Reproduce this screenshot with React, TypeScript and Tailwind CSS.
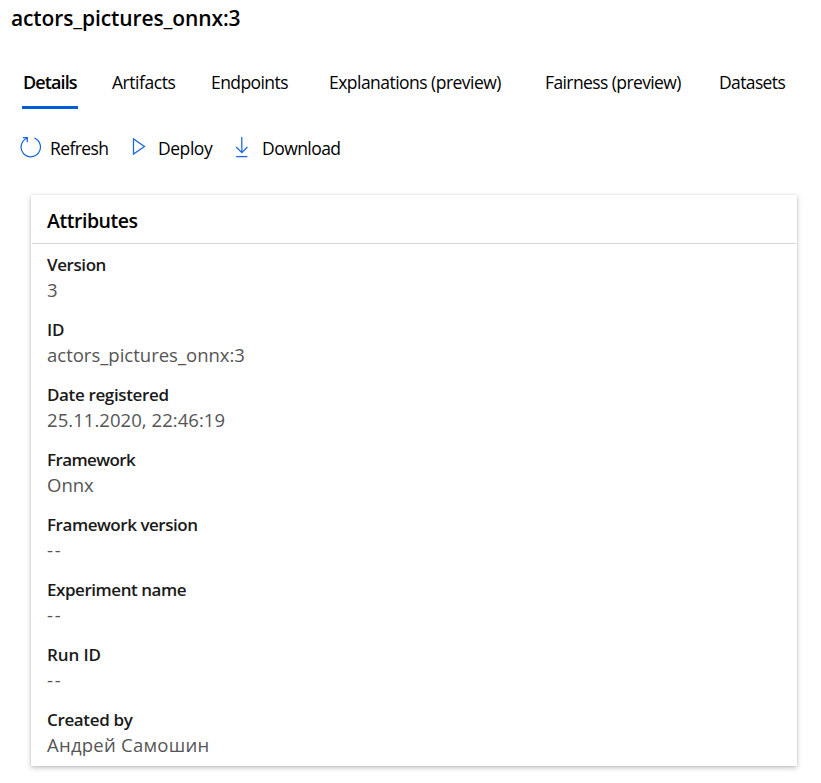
const tabs = [
  { label: 'Details', style: 'w-[56px] text-[18px] font-semibold tracking-[-0.9px] border-[#015cda]', gap: 'ml-[22px]' },
  { label: 'Artifacts', style: 'w-[66px] text-[17.5px] tracking-[-0.45px] border-transparent', gap: 'ml-[33px]' },
  { label: 'Endpoints', style: 'w-[80px] text-[17.5px] tracking-[-0.58px] border-transparent', gap: 'ml-[33px]' },
  { label: 'Explanations (preview)', style: 'w-[174px] text-[17.5px] tracking-[-0.53px] border-transparent', gap: 'ml-[38px]' },
  { label: 'Fairness (preview)', style: 'w-[138px] text-[17.5px] tracking-[-0.6px] border-transparent', gap: 'ml-[42px]' },
  { label: 'Datasets', style: 'w-[68px] text-[17.5px] tracking-[-0.62px] border-transparent', gap: 'ml-[36px]' },
];

const attributes = [
  { label: 'Version', value: '3', l: 'tracking-[-0.42px]', v: 'tracking-[0px]' },
  { label: 'ID', value: 'actors_pictures_onnx:3', l: 'tracking-[-0.3px]', v: 'tracking-[0px]' },
  { label: 'Date registered', value: '25.11.2020, 22:46:19', l: 'tracking-[-0.36px]', v: 'tracking-[0.05px]' },
  { label: 'Framework', value: 'Onnx', l: 'tracking-[-0.6px]', v: 'tracking-[0px]' },
  { label: 'Framework version', value: '--', l: 'tracking-[-0.46px]', v: 'tracking-[1.8px]' },
  { label: 'Experiment name', value: '--', l: 'tracking-[-0.46px]', v: 'tracking-[1.8px]' },
  { label: 'Run ID', value: '--', l: 'tracking-[-0.1px]', v: 'tracking-[1.8px]' },
  { label: 'Created by', value: 'Андрей Самошин', l: 'tracking-[-0.35px]', v: 'tracking-[0.25px]' },
];

export default function App() {
  return (
    <div className="h-[783px] w-[821px] overflow-hidden bg-white font-['Open_Sans',sans-serif] text-black">
      <h1 className="h-[60px] pl-[11px] pt-[4px] text-[21px] leading-[28px] font-semibold tracking-[-0.12px] whitespace-nowrap">
        actors_pictures_onnx:3
      </h1>
      <nav className="flex h-[49px]">
        {tabs.map((t) => (
          <div key={t.label} className={`shrink-0 border-b-[3px] pl-[1px] pt-[8px] leading-[28px] whitespace-nowrap ${t.gap} ${t.style}`}>
            {t.label}
          </div>
        ))}
      </nav>
      <div className="flex h-[86px] pt-[24px] text-[17.5px] leading-[30px] whitespace-nowrap">
        <div className="flex w-[111px] pl-[20px]">
          <svg className="mt-[3px] mr-[8px] h-[22px] w-[22px] shrink-0" viewBox="0 0 22 22" fill="none" stroke="#1a66dc" strokeWidth="1.25">
            <path d="M14.5 2.2A9.7 9.7 0 1 1 6.8 2.3M2.8 1.7H7.3V6.3" />
          </svg>
          <span className="tracking-[-0.6px]">Refresh</span>
        </div>
        <div className="flex w-[104px] pl-[21px]">
          <svg className="mt-[3px] mr-[9px] h-[22px] w-[17px] shrink-0" viewBox="0 0 17 22" fill="none" stroke="#1a66dc" strokeWidth="1.25">
            <path d="M1.5 3V18L12.5 10.5Z" />
          </svg>
          <span className="tracking-[-0.45px]">Deploy</span>
        </div>
        <div className="flex pl-[20px]">
          <svg className="mt-[3px] mr-[12px] h-[22px] w-[15px] shrink-0" viewBox="0 0 15 22" fill="none" stroke="#1a66dc" strokeWidth="1.25">
            <path d="M6.8 1V16.5M1.2 11L6.8 16.6L12.4 11M1.2 20.5H12.4" />
          </svg>
          <span className="tracking-[-0.55px]">Download</span>
        </div>
      </div>
      <section className="ml-[31px] h-[571px] w-[766px] bg-white shadow-[0_0_2px_rgba(0,0,0,0.12),0_2px_5px_rgba(0,0,0,0.22)]">
        <h2 className="mx-px h-[49px] border-b border-[#d5d5d5] pl-[15px] pt-[12px] text-[19.5px] leading-[28px] font-semibold tracking-[-0.45px]">
          Attributes
        </h2>
        <dl className="pl-[16px] pt-[8px]">
          {attributes.map((a) => (
            <div key={a.label} className="h-[65px] whitespace-nowrap">
              <dt className={`text-[17px] leading-[25px] font-semibold text-[#1a1a1a] ${a.l}`}>{a.label}</dt>
              <dd className={`text-[18.5px] leading-[26px] text-[#555555] ${a.v}`}>{a.value}</dd>
            </div>
          ))}
        </dl>
      </section>
    </div>
  );
}
